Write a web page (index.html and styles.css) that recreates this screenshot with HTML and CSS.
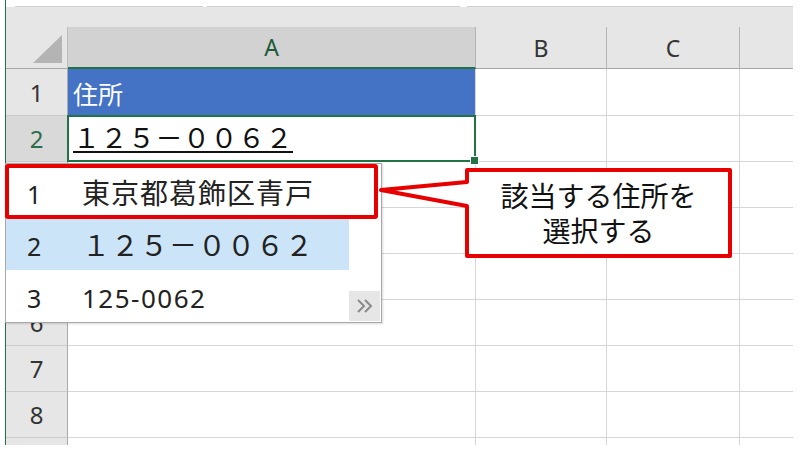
FILE: index.html
```html
<!DOCTYPE html>
<html lang="ja">
<head>
<meta charset="utf-8">
<title>住所入力</title>
<link rel="stylesheet" href="styles.css">
</head>
<body>
<div class="window">
  <div class="topline"><span class="seg s1"></span><span class="seg s2"></span><span class="seg s3"></span></div>
  <div class="band"></div>
  <div class="grid">
    <div class="corner"></div>
    <div class="hd sel">A</div>
    <div class="hd">B</div>
    <div class="hd">C</div>
    <div class="hd last"></div>

    <div class="rh">1</div>
    <div class="c a1">住所</div>
    <div class="c"></div><div class="c"></div><div class="c last"></div>

    <div class="rh sel">2</div>
    <div class="c a2"><span class="ime">１２５－００６２</span></div>
    <div class="c"></div><div class="c"></div><div class="c last"></div>

    <div class="rh"></div>
    <div class="c"></div><div class="c"></div><div class="c"></div><div class="c last"></div>

    <div class="rh"></div>
    <div class="c"></div><div class="c"></div><div class="c"></div><div class="c last"></div>

    <div class="rh"></div>
    <div class="c"></div><div class="c"></div><div class="c"></div><div class="c last"></div>

    <div class="rh">6</div>
    <div class="c"></div><div class="c"></div><div class="c"></div><div class="c last"></div>

    <div class="rh">7</div>
    <div class="c"></div><div class="c"></div><div class="c"></div><div class="c last"></div>

    <div class="rh">8</div>
    <div class="c"></div><div class="c"></div><div class="c"></div><div class="c last"></div>

    <div class="rh r9"></div>
    <div class="c r9"></div><div class="c r9"></div><div class="c r9"></div><div class="c last r9"></div>
  </div>
</div>

<div class="cand">
  <div class="list">
    <div class="item i1"><span class="num">1</span><span class="txt-j">東京都葛飾区青戸</span></div>
    <div class="item i2"><span class="num">2</span><span class="txt-j">１２５－００６２</span></div>
    <div class="item i3"><span class="num">3</span><span class="txt-h">125-0062</span></div>
  </div>
  <div class="more">
    <svg width="16" height="14" viewBox="0 0 16 14"><polyline points="1,1 7,7 1,13" fill="none" stroke="#8a8a8a" stroke-width="2"/><polyline points="8,1 14,7 8,13" fill="none" stroke="#8a8a8a" stroke-width="2"/></svg>
  </div>
</div>

<div class="mark"></div>

<div class="callout">
  <svg class="callout-shape" width="360" height="94" viewBox="0 0 360 94">
    <path d="M92,4 H355 V90 H92 V40 L6,24 L92,16 Z" fill="#fff" stroke="#e60000" stroke-width="4" stroke-linejoin="round"/>
  </svg>
  <div class="callout-text"><p class="callout-p">該当する住所を<br>選択する</p></div>
</div>
</body>
</html>
```
FILE: styles.css
```css
body {
  margin: 0;
  width: 800px;
  height: 453px;
  overflow: hidden;
  position: relative;
  background: #fff;
  font-family: "Noto Sans", "Noto Sans CJK JP", sans-serif;
  color: #222;
}

.window {
  margin-left: 5px;
  width: 788px;
  height: 445px;
  box-sizing: border-box;
  border-left: 1px solid #217346;
  display: flex;
  flex-direction: column;
}

.topline {
  height: 7px;
  display: flex;
  align-items: flex-end;
}
.seg { height: 1px; background: #cfcfcf; }
.s1 { margin-left: 9px; width: 188px; }
.s2 { margin-left: 4px; width: 253px; }
.s3 { margin-left: 7px; width: 326px; }

.band {
  height: 20px;
  background: #e6e6e6;
}

.grid {
  display: grid;
  grid-template-columns: 62px 408px 131px 133px 53px;
  grid-template-rows: 42px 47px repeat(7, 46px) 7px;
}
.grid > div { box-sizing: border-box; }

.corner {
  background: #e6e6e6;
  border-right: 1px solid #bdbdbd;
  border-bottom: 1px solid #a6a6a6;
  position: relative;
}
.corner::after {
  content: "";
  position: absolute;
  left: 27px;
  top: 8px;
  width: 29px;
  height: 28px;
  background: #b4b4b4;
  clip-path: polygon(100% 0, 100% 100%, 0 100%);
}

.hd {
  background: #e6e6e6;
  border-right: 1px solid #b4b4b4;
  border-bottom: 1px solid #a6a6a6;
  display: flex;
  align-items: center;
  justify-content: center;
  font-size: 23px;
  color: #333;
}
.hd.sel {
  background: #d2d2d2;
  color: #1f5a3a;
  border-bottom: 2px solid #217346;
}
.hd.last { border-right: none; }

.rh {
  background: #e6e6e6;
  border-right: 1px solid #a9a9a9;
  border-bottom: 1px solid #cacaca;
  display: flex;
  align-items: center;
  justify-content: center;
  font-size: 24px;
  color: #333;
}
.rh.sel {
  background: #d9d9d9;
  color: #2e6e4a;
}

.c {
  background: #fff;
  border-right: 1px solid #d6d6d6;
  border-bottom: 1px solid #d6d6d6;
}
.c.last { border-right: none; }
.r9 { border-bottom: none !important; }

.a1 {
  background: #4472c4;
  color: #fff;
  font-family: "Noto Sans CJK JP", sans-serif;
  font-size: 25px;
  display: flex;
  align-items: center;
  padding-left: 5px;
  border-bottom: none;
}

.a2 {
  position: relative;
  z-index: 2;
  display: flex;
  align-items: center;
  padding-left: 5px;
  padding-bottom: 4px;
}
.a2::before {
  content: "";
  position: absolute;
  left: -1px;
  top: -1px;
  right: -1px;
  bottom: -1px;
  border: 2px solid #217346;
}
.a2::after {
  content: "";
  position: absolute;
  right: -4px;
  bottom: -4px;
  width: 7px;
  height: 7px;
  background: #217346;
  border: 1px solid #fff;
}
.ime {
  font-family: "Noto Sans CJK JP", sans-serif;
  font-size: 27px;
  letter-spacing: 0.5px;
  color: #111;
  text-decoration: underline;
  text-decoration-thickness: 2px;
  text-underline-offset: 3px;
}

.cand {
  position: absolute;
  left: 5px;
  top: 163px;
  width: 377px;
  height: 160px;
  box-sizing: border-box;
  border: 1px solid #a8a8a8;
  background: #fff;
  box-shadow: 1px 1px 2px rgba(0, 0, 0, 0.15);
  z-index: 5;
}
.list {
  width: 343px;
  display: flex;
  flex-direction: column;
}
.item {
  display: flex;
  align-items: baseline;
  box-sizing: border-box;
}
.i1 { height: 55px; padding-top: 8px; }
.i2 { height: 51px; padding-top: 5px; background: #cce4f7; }
.i3 { height: 52px; padding-top: 10px; }
.num {
  width: 76px;
  padding-left: 21px;
  box-sizing: border-box;
  font-family: "Noto Sans", sans-serif;
  font-size: 25px;
  color: #222;
}
.txt-j {
  font-family: "Noto Sans CJK JP", sans-serif;
  font-size: 28px;
  letter-spacing: 1px;
  color: #222;
}
.txt-h {
  font-family: "Noto Sans", sans-serif;
  font-size: 26px;
  letter-spacing: 1.5px;
  color: #222;
}
.more {
  position: absolute;
  right: 1px;
  bottom: 1px;
  width: 31px;
  height: 30px;
  background: #e6e6e6;
  display: flex;
  align-items: center;
  justify-content: center;
}

.mark {
  position: absolute;
  left: 5px;
  top: 164px;
  width: 373px;
  height: 55px;
  box-sizing: border-box;
  border: 4px solid #e60000;
  border-radius: 3px;
  z-index: 6;
}

.callout {
  position: absolute;
  left: 375px;
  top: 166px;
  width: 360px;
  height: 94px;
  z-index: 6;
}
.callout-shape {
  position: absolute;
  left: 0;
  top: 0;
}
.callout-text {
  position: absolute;
  left: 92px;
  top: 0;
  width: 263px;
  height: 94px;
  display: flex;
  align-items: center;
  justify-content: center;
}
.callout-p {
  margin: 0;
  text-align: center;
  font-family: "Noto Sans CJK JP", sans-serif;
  font-size: 28px;
  line-height: 35px;
  color: #111;
}
```
